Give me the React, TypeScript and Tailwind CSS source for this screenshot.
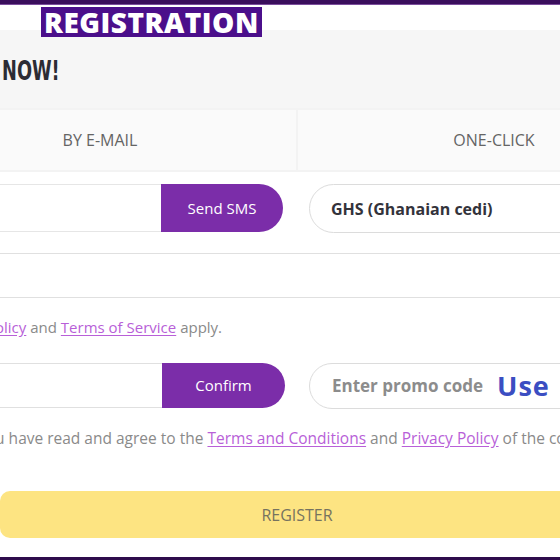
export default function App() {
  return (
    <div className="w-[560px] h-[560px] overflow-hidden bg-white flex flex-col" style={{ fontFamily: '"Open Sans", "Liberation Sans", sans-serif' }}>
      {/* top bar */}
      <div className="h-[5px] shrink-0 bg-[#3a0e5c] border-b border-[#7b4d9c]" />

      {/* title strip */}
      <div className="h-[25px] shrink-0 bg-white pl-[41px] pt-[2px]">
        <div className="relative z-10 inline-flex h-[30px] items-center bg-[#4b0f8b] px-[3px] text-[28px] font-extrabold leading-none text-white tracking-[0.5px]">
          REGISTRATION
        </div>
      </div>

      {/* main form, wider than the viewport and shifted left */}
      <div className="w-[786px] shrink-0 -ml-[96px] flex flex-col">
        <div className="h-[78px] bg-[#f6f6f6] flex items-center pl-[98px] pt-[4px]">
          <span className="inline-block origin-left scale-x-[0.76] text-[26px] font-bold text-[#2c2c34]" style={{ fontFamily: '"DejaVu Sans Condensed", "DejaVu Sans", sans-serif' }}>NOW!</span>
        </div>

        {/* tabs */}
        <div className="h-[64px] bg-[#f3f3f3] pt-[2px] pb-[2px] flex gap-[2px]">
          <div className="flex-1 bg-[#fafafa] flex items-center justify-center text-[16px] text-[#646464]">BY E-MAIL</div>
          <div className="flex-1 bg-[#fafafa] flex items-center justify-center text-[16px] text-[#646464]">ONE-CLICK</div>
        </div>

        {/* phone + currency */}
        <div className="mt-[12px] flex gap-[26px]">
          <div className="w-[379px] h-[48px] flex">
            <div className="flex-1 border-y border-[#e6e6e6] bg-white" />
            <button className="w-[122px] rounded-r-full bg-[#7b2da9] text-[15px] text-white">Send SMS</button>
          </div>
          <div className="flex-1 h-[49px] rounded-full border border-[#dcdcdc] flex items-center pl-[21px] text-[16px] font-bold text-[#33333b]">
            GHS (Ghanaian cedi)
          </div>
        </div>

        {/* full width input */}
        <div className="mt-[20px] h-[45px] border-y border-[#e0e0e0] bg-white" />

        <p className="mt-[18px] pl-[82px] text-[15px] leading-[22px] text-[#8a8a8a]">
          <span className="text-[#b85fd8] underline underline-offset-2">Policy</span> and{' '}
          <span className="text-[#b85fd8] underline underline-offset-2">Terms of Service</span> apply.
        </p>

        {/* promo row */}
        <div className="mt-[25px] flex gap-[24px]">
          <div className="w-[381px] h-[45px] flex">
            <div className="flex-1 border-y border-[#e0e0e0] bg-white" />
            <button className="w-[123px] rounded-r-full bg-[#7b2da9] text-[15px] text-white">Confirm</button>
          </div>
          <div className="flex-1 h-[46px] rounded-full border border-[#dcdcdc] flex items-center pl-[22px]">
            <span className="text-[17px] font-bold text-[#8c8c8c]">Enter promo code</span>
            <span className="ml-[14px] text-[27px] font-bold text-[#3b4ec2] tracking-[1px]">Use</span>
          </div>
        </div>

        <p className="mt-[18px] pl-[74px] whitespace-nowrap text-[15.5px] leading-[22px] text-[#8a8a8a]">
          you have read and agree to the{' '}
          <span className="text-[#b85fd8] underline underline-offset-2">Terms and Conditions</span> and{' '}
          <span className="text-[#b85fd8] underline underline-offset-2">Privacy Policy</span> of the company
        </p>

        {/* register */}
        <div className="mt-[42px] pl-[96px]">
          <button className="w-[594px] h-[47px] rounded-[10px] bg-[#fde482] text-[16px] font-medium text-[#76735f]">REGISTER</button>
        </div>
      </div>

      <div className="flex-1" />
      <div className="h-[3px] shrink-0 bg-[#2e0c4c]" />
    </div>
  )
}
